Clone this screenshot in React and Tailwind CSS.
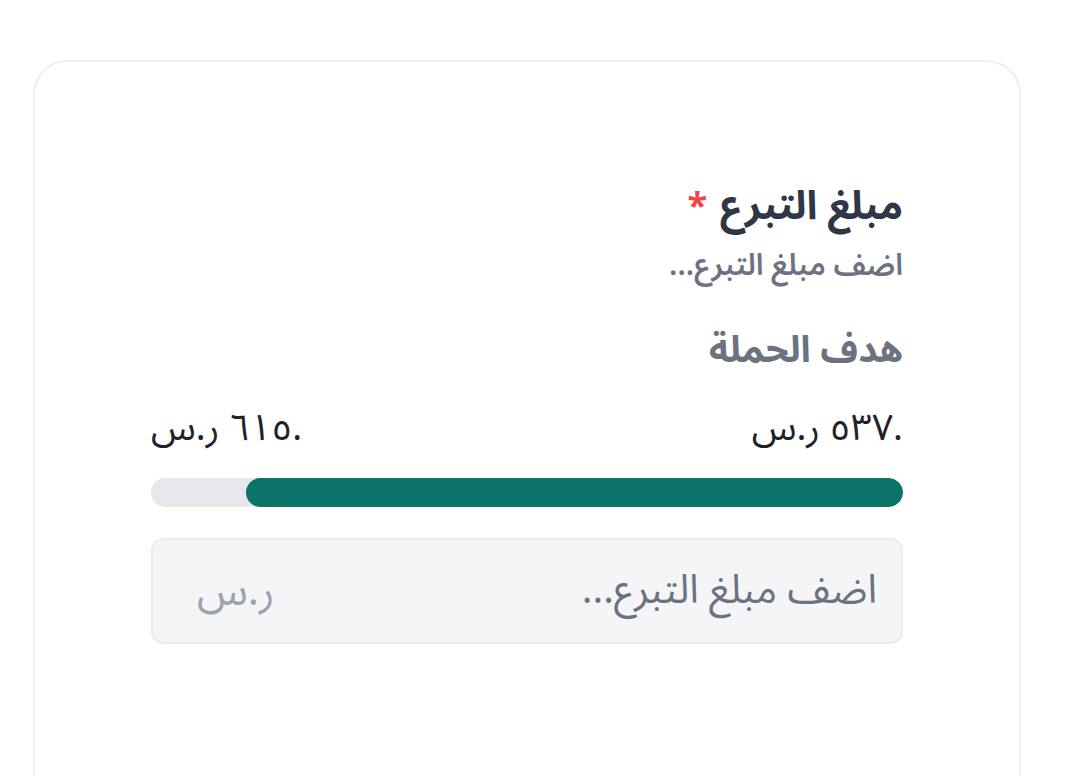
import React from "react";

const FONT = { fontFamily: '"Noto Sans Arabic", "DejaVu Sans", "Noto Sans", sans-serif' };

export default function App() {
  const raised = 537;
  const goal = 615;
  const pct = (raised / goal) * 100;

  return (
    <div className="min-h-screen bg-white overflow-hidden" style={FONT}>
      <div className="ml-[33px] mt-[60px] w-[988px] h-[716px] rounded-t-[34px] border-2 border-b-0 border-[#eeeff2] bg-white px-[116px] pt-[121px]">
        <div dir="rtl" className="flex flex-col">
          <div className="flex items-center gap-[13px]">
            <span className="text-[40px] leading-[48px] font-bold text-[#2f3645]">مبلغ التبرع</span>
            <span className="text-[36px] leading-[48px] font-bold text-[#ef4444]">*</span>
          </div>
          <p className="mt-[17px] text-[30px] leading-[36px] font-semibold text-[#6b7280]">اضف مبلغ التبرع...</p>

          <h3 className="mt-[42px] text-[37px] leading-[48px] font-bold text-[#6b7280]">هدف الحملة</h3>

          <div className="mt-[32px] flex justify-between text-[37px] leading-[44px] text-[#1f2328]">
            <span>.٥٣٧ ر.س</span>
            <span>.٦١٥ ر.س</span>
          </div>

          <div className="mt-[28px] h-[29px] w-full rounded-full bg-[#e5e7eb] overflow-hidden">
            <div className="h-full rounded-full bg-[#0c7369]" style={{ width: `${pct}%` }} />
          </div>

          <div className="mt-[31px] flex items-center h-[106px] rounded-[12px] border-2 border-[#eaecef] bg-[#f4f5f7] pr-[24px] pl-[44px]">
            <input
              type="text"
              placeholder="اضف مبلغ التبرع..."
              className="flex-1 min-w-0 bg-transparent outline-none text-[40px] text-[#1f2937] placeholder:text-[#6b7280]"
              style={FONT}
            />
            <span className="text-[42px] text-[#9ca3af]">ر.س</span>
          </div>
        </div>
      </div>
    </div>
  );
}
